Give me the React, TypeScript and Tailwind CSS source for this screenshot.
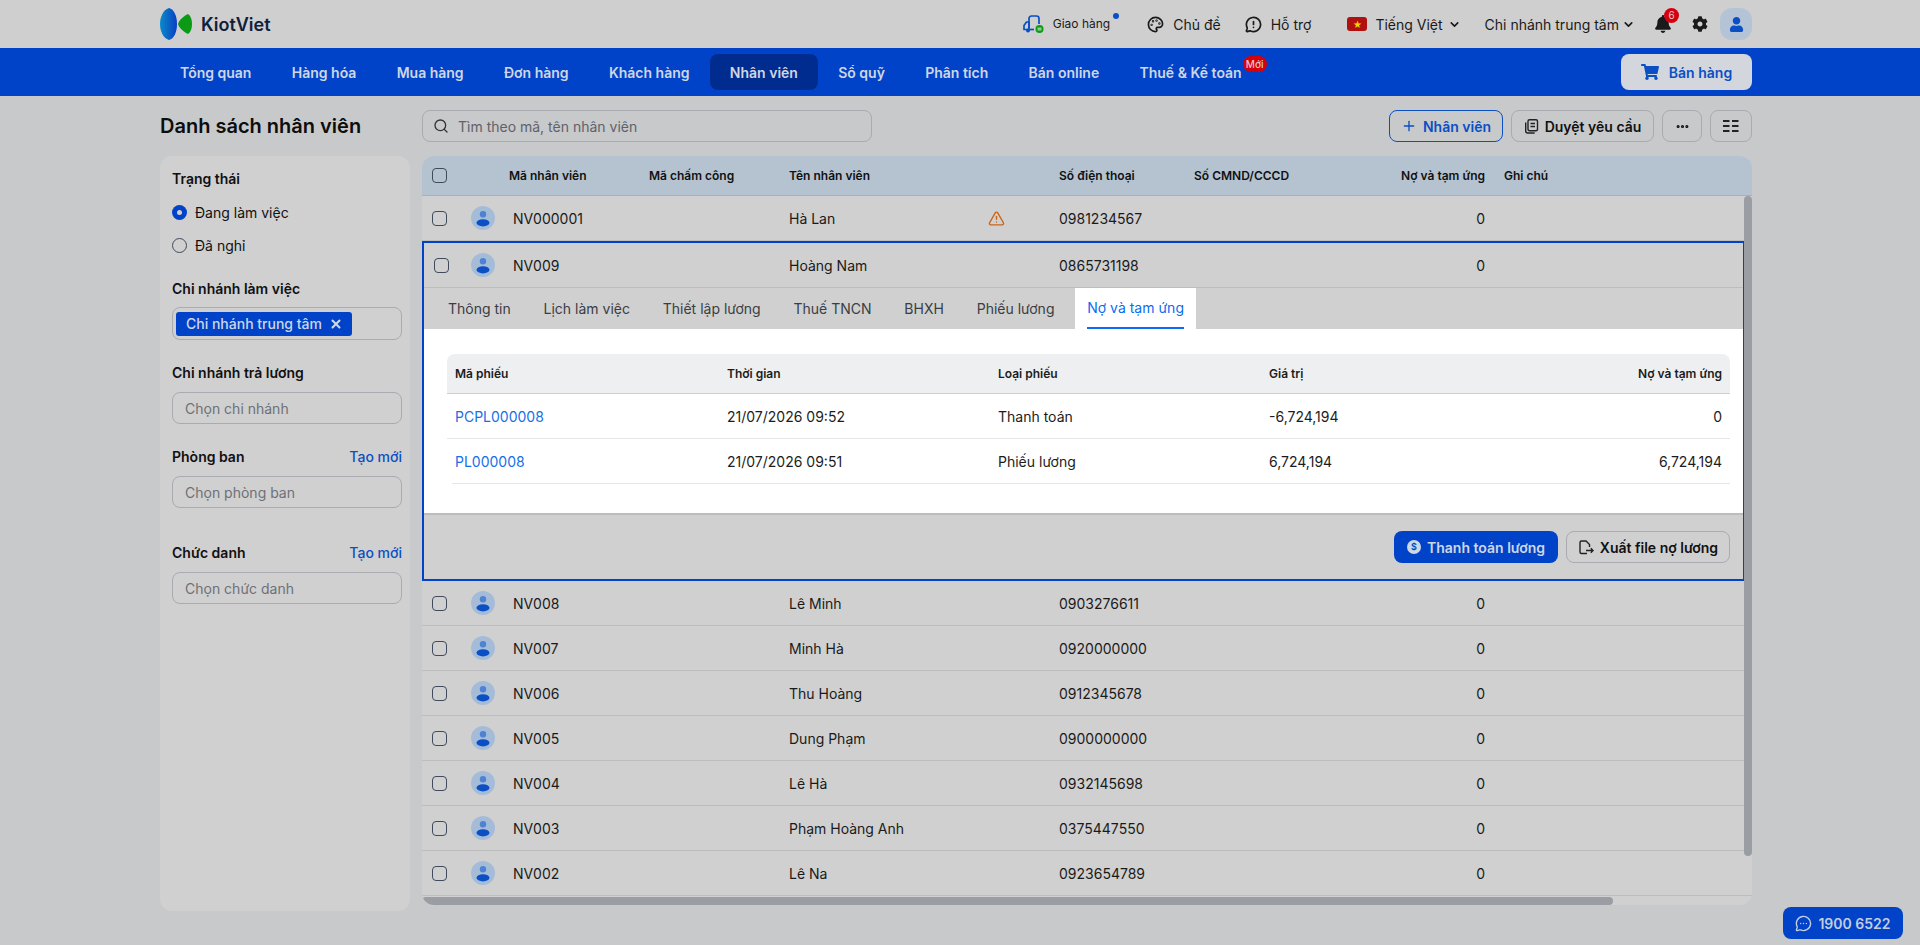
import React from "react";
import { Search, Plus, Palette, MessageCircleWarning, ChevronDown, X, TriangleAlert, Ellipsis, MessageCircleMore } from "lucide-react";
import { FaBell, FaCog, FaShoppingCart, FaUser } from "react-icons/fa";

const nav = ["Tổng quan", "Hàng hóa", "Mua hàng", "Đơn hàng", "Khách hàng", "Nhân viên", "Sổ quỹ", "Phân tích", "Bán online", "Thuế & Kế toán"];
const rowsBelow = [
  ["NV008", "Lê Minh", "0903276611"],
  ["NV007", "Minh Hà", "0920000000"],
  ["NV006", "Thu Hoàng", "0912345678"],
  ["NV005", "Dung Phạm", "0900000000"],
  ["NV004", "Lê Hà", "0932145698"],
  ["NV003", "Phạm Hoàng Anh", "0375447550"],
  ["NV002", "Lê Na", "0923654789"],
];
const tabs = ["Thông tin", "Lịch làm việc", "Thiết lập lương", "Thuế TNCN", "BHXH", "Phiếu lương"];

function Check() {
  return <span className="block w-[15px] h-[15px] rounded-[4px] border border-[#3f4a5a] shrink-0" />;
}
function Avatar() {
  return (
    <span className="w-6 h-6 rounded-full bg-[#a5bcd9] flex items-center justify-center shrink-0">
      <svg width="14" height="17" viewBox="0 0 14 17">
        <circle cx="7" cy="4.2" r="3.2" fill="#4f82d0" />
        <ellipse cx="7" cy="12.8" rx="6.5" ry="3.6" fill="#0a4fc4" />
      </svg>
    </span>
  );
}
function Row({ code, name, phone, warn, inPanel }: { code: string; name: string; phone: string; warn?: boolean; inPanel?: boolean }) {
  return (
    <div className="flex items-center h-[45px] border-b border-[#bdbdbd] text-[14px] text-[#1a1a1a]">
      <span className="w-[10px] shrink-0" />
      <Check />
      <span className={inPanel ? "w-[22px] shrink-0" : "w-6 shrink-0"} />
      <Avatar />
      <span className="w-[18px] shrink-0" />
      <span className="w-[276px] shrink-0">{code}</span>
      <span className="w-[199px] shrink-0">{name}</span>
      <span className="w-[71px] shrink-0 flex items-center">{warn && <TriangleAlert size={17} className="text-[#c9661a]" />}</span>
      <span className="w-[130px] shrink-0">{phone}</span>
      <span className="w-[296px] text-right shrink-0">0</span>
    </div>
  );
}

function Filter({ label, action, placeholder }: { label: string; action?: boolean; placeholder: string }) {
  return (
    <div>
      <div className="flex justify-between items-center h-5 text-[14px]">
        <span className="font-semibold text-[#111]">{label}</span>
        {action && <span className="font-medium text-[#0a4fc4] text-[14px]">Tạo mới</span>}
      </div>
      <div className="mt-[10px] h-8 rounded-lg border border-[#a9abb0] flex items-center px-3 text-[14px] text-[#6e7078]">{placeholder}</div>
    </div>
  );
}

export default function App() {
  return (
    <div className="w-[1920px] h-[945px] overflow-hidden relative bg-[#c8c9cb] text-[#111] font-['Inter',sans-serif]">
      <header className="h-12 bg-[#cfcfcf] pl-[160px] pr-[168px] flex items-center">
        <svg width="33" height="32" viewBox="0 0 33 32" className="shrink-0">
          <defs>
            <linearGradient id="kv" x1="0" x2="1" y1="0" y2="0">
              <stop offset="0" stopColor="#0a8bc9" />
              <stop offset="1" stopColor="#0a3fc4" />
            </linearGradient>
          </defs>
          <path d="M9 0C3 2 0 9 0 16s3 14 9 16c5-1 8-8 8-16S14 1 9 0z" fill="url(#kv)" />
          <path d="M28 6c-4 2-9 6-10 10 1 4 6 8 10 10 3-2 4-6 4-10s-1-8-4-10z" fill="#0a9a15" />
        </svg>
        <span className="ml-2 text-[18px] font-semibold text-[#10203a]">KiotViet</span>
        <div className="ml-auto flex items-center text-[14px] text-[#1a1a1a]">
          <svg width="22" height="20" viewBox="0 0 22 20" fill="none" className="shrink-0">
            <path d="M6 14V4.5A2.5 2.5 0 0 1 8.500 2h5A2.500 2.500 0 0 1 16 4.500V10" stroke="#0a4fc4" strokeWidth="1.7" />
            <path d="M6 8H3.500L1 11.500V15.500h5z" stroke="#0a4fc4" strokeWidth="1.700" strokeLinejoin="round" />
            <path d="M6 15.500h5" stroke="#0a4fc4" strokeWidth="1.700" />
            <circle cx="5" cy="16.500" r="2" fill="#0a4fc4" />
            <circle cx="16.500" cy="15" r="4" fill="#0a9a15" />
            <path d="M14.500 14.200h4M14.500 15.900h4" stroke="#cfe8cf" />
          </svg>
          <span className="relative ml-[8px] text-[12px] pr-3">Giao hàng<span className="absolute right-[3px] top-[-2px] w-[6px] h-[6px] rounded-full bg-[#0a4fc4]" /></span>
          <Palette size={17} strokeWidth={2.4} className="ml-[25px]" />
          <span className="ml-[9px]">Chủ đề</span>
          <MessageCircleWarning size={17} strokeWidth={2.4} className="ml-[24px]" />
          <span className="ml-[9px]">Hỗ trợ</span>
          <span className="ml-[36px] w-5 h-[14px] rounded-[3px] bg-[#b0100f] flex items-center justify-center text-[#f2d500] text-[9px] leading-none">★</span>
          <span className="ml-2">Tiếng Việt</span>
          <ChevronDown size={13} strokeWidth={3} className="ml-[5px]" />
          <span className="ml-[24px]">Chi nhánh trung tâm</span>
          <ChevronDown size={13} strokeWidth={3} className="ml-[3px]" />
          <span className="relative ml-[19px] block">
            <FaBell size={18} />
            <span className="absolute -top-[7px] -right-[7px] w-[15px] h-[15px] rounded-full bg-[#d5000f] text-[#e8c8c8] text-[10px] flex items-center justify-center">6</span>
          </span>
          <FaCog size={16} className="ml-[20px]" />
          <span className="ml-3 w-8 h-8 rounded-xl bg-[#b5c3d6] flex items-center justify-center">
            <FaUser size={15} className="text-[#0a4fc4]" />
          </span>
        </div>
      </header>

      <nav className="h-12 bg-[#0043c8] pl-[160px] pr-[168px] flex items-center gap-[0.3px]">
        {nav.map((n, i) => (
          <span key={n} className={`relative h-9 px-5 flex items-center rounded-lg text-[14px] font-semibold text-[#cfd6e4] whitespace-nowrap ${i === 5 ? "bg-[#002c8f]" : ""}`}>
            {n}
            {i === 9 && <span className="absolute right-[-5px] top-[2px] h-4 w-6 rounded-full bg-[#d5000f] text-[#e5c5c5] text-[10px] font-medium flex items-center justify-center">Mới</span>}
          </span>
        ))}
        <span className="ml-auto w-[131px] h-9 rounded-lg bg-[#d3d6dc] flex items-center justify-center gap-[10px] text-[14px] font-semibold text-[#0a4fc4]">
          <FaShoppingCart size={18} />Bán hàng
        </span>
      </nav>

      <main className="pl-[160px] pr-[168px] pt-[14px]">
        <div className="flex items-center h-8">
          <h1 className="w-[262px] text-[20px] font-semibold text-[#0d0d0d] whitespace-nowrap">Danh sách nhân viên</h1>
          <div className="w-[450px] h-8 rounded-lg border border-[#a9abb0] flex items-center pl-[10px] text-[14px] text-[#5f6269]">
            <Search size={16} className="text-[#333] mr-[9px]" />Tìm theo mã, tên nhân viên
          </div>
          <div className="ml-auto flex items-center gap-2 text-[14px] font-semibold">
            <span className="w-[114px] h-8 rounded-lg border border-[#0a4fc4] text-[#0a4fc4] flex items-center justify-center gap-[6px]"><Plus size={16} />Nhân viên</span>
            <span className="w-[143px] h-8 rounded-lg border border-[#a9abb0] flex items-center justify-center gap-[6px]">
              <svg width="15" height="16" viewBox="0 0 15 16" fill="none" stroke="#222" strokeWidth="1.4"><rect x="4" y="1.700" width="9.500" height="11" rx="1.500" /><path d="M1.700 4.500v8.500a2 2 0 0 0 2 2h7" /><path d="M6.500 5.500h4.500M6.500 8.500h4.500" /></svg>
              Duyệt yêu cầu
            </span>
            <span className="w-[40px] h-8 rounded-lg border border-[#a9abb0] flex items-center justify-center"><Ellipsis size={15} strokeWidth={3} /></span>
            <span className="w-[42px] h-8 rounded-lg border border-[#a9abb0] flex items-center justify-center">
              <svg width="16" height="12" viewBox="0 0 16 12" fill="#222"><rect width="6.500" height="2" /><rect x="9" width="6.500" height="2" /><rect y="5" width="6.500" height="2" /><rect x="9" y="5" width="6.500" height="2" /><rect y="10" width="6.500" height="2" /><rect x="9" y="10" width="6.500" height="2" /></svg>
            </span>
          </div>
        </div>

        <div className="flex items-start gap-[12px] mt-[14px]">
          <aside className="w-[250px] h-[755px] shrink-0 bg-[#d0d0d0] rounded-xl pl-3 pr-2 pt-[12px]">
            <div className="text-[14px] font-semibold h-5">Trạng thái</div>
            <div className="mt-[14px] flex items-center gap-[8px] h-5 text-[14px]">
              <span className="w-[15px] h-[15px] rounded-full bg-[#0043c8] flex items-center justify-center"><span className="w-[5px] h-[5px] rounded-full bg-[#d0d0d0]" /></span>Đang làm việc
            </div>
            <div className="mt-[13px] flex items-center gap-[8px] h-5 text-[14px]">
              <span className="w-[15px] h-[15px] rounded-full border border-[#3f4a5a]" />Đã nghỉ
            </div>
            <div className="mt-[23px] text-[14px] font-semibold h-5">Chi nhánh làm việc</div>
            <div className="mt-[9px] h-[33px] rounded-lg border border-[#a9abb0] flex items-center px-[3px]">
              <span className="w-[176px] h-6 rounded-[3px] bg-[#0043c8] flex items-center pl-[10px] text-[14px] font-medium text-[#cfd6e4] whitespace-nowrap">Chi nhánh trung tâm<X size={14} strokeWidth={3.5} className="ml-[7px]" /></span>
            </div>
            <div className="mt-[22px] flex flex-col gap-[22px]">
              <Filter label="Chi nhánh trả lương" placeholder="Chọn chi nhánh" />
              <Filter label="Phòng ban" action placeholder="Chọn phòng ban" />
              <div className="mt-[12px]"><Filter label="Chức danh" action placeholder="Chọn chức danh" /></div>
            </div>
          </aside>

          <section className="relative w-[1330px] h-[749px] bg-[#d0d0d0] rounded-xl overflow-hidden">
            <div className="h-10 bg-[#b5c3d1] border-b border-[#9db2cc] flex items-center text-[12px] font-semibold text-[#111]">
              <span className="w-[10px]" /><Check />
              <span className="w-[62px]" />
              <span className="w-[140px]">Mã nhân viên</span>
              <span className="w-[140px]">Mã chấm công</span>
              <span className="w-[270px]">Tên nhân viên</span>
              <span className="w-[135px]">Số điện thoại</span>
              <span className="w-[130px]">Số CMND/CCCD</span>
              <span className="w-[161px] text-right">Nợ và tạm ứng</span>
              <span className="ml-[19px]">Ghi chú</span>
            </div>
            <Row code="NV000001" name="Hà Lan" phone="0981234567" warn />
            <div className="mr-[7px] border-2 border-[#0043c8]">
              <Row code="NV009" name="Hoàng Nam" phone="0865731198" inPanel />
              <div className="h-[41px] flex items-end pl-[12px] gap-[8.8px] text-[14px] text-[#3a3d44]">
                {tabs.map((t) => <span key={t} className="h-[41px] px-3 flex items-center">{t}</span>)}
                <span className="h-[41px] px-3 bg-white text-[#0a6cf0]">
                  <span className="h-full flex items-center border-b-2 border-[#0a6cf0]">Nợ và tạm ứng</span>
                </span>
              </div>
              <div className="h-[186px] bg-white border-b-2 border-[#bdbdbd] pt-[25px] pl-[23px] pr-[13px] text-[14px] text-[#1c1c1c]">
                <div className="h-10 bg-[#eeeff1] rounded-t-lg border-b border-[#cfd0d4] flex items-center px-2 text-[12px] font-semibold">
                  <span className="w-[272px]">Mã phiếu</span><span className="w-[271px]">Thời gian</span><span className="w-[271px]">Loại phiếu</span><span className="w-[200px]">Giá trị</span><span className="ml-auto">Nợ và tạm ứng</span>
                </div>
                <div className="h-[45px] border-b border-[#e6e6e6] flex items-center px-2">
                  <span className="w-[272px] text-[#1670e6]">PCPL000008</span><span className="w-[271px]">21/07/2026 09:52</span><span className="w-[271px]">Thanh toán</span><span className="w-[200px]">-6,724,194</span><span className="ml-auto">0</span>
                </div>
                <div className="h-[45px] ml-[5px] border-b border-[#e6e6e6] flex items-center pl-[3px] pr-2">
                  <span className="w-[272px] text-[#1670e6]">PL000008</span><span className="w-[271px]">21/07/2026 09:51</span><span className="w-[271px]">Phiếu lương</span><span className="w-[200px]">6,724,194</span><span className="ml-auto">6,724,194</span>
                </div>
              </div>
              <div className="h-[64px] flex items-center justify-end gap-2 pr-[13px] text-[14px] font-semibold">
                <span className="w-[164px] h-8 rounded-lg bg-[#0043c8] text-[#cfd6e4] flex items-center justify-center gap-[6px]">
                  <span className="w-[14px] h-[14px] rounded-full bg-[#cfd6e4] text-[#0043c8] text-[9px] flex items-center justify-center">$</span>Thanh toán lương
                </span>
                <span className="w-[164px] h-8 rounded-lg border border-[#a9abb0] flex items-center justify-center gap-[6px]">
                  <svg width="16" height="15" viewBox="0 0 16 15" fill="none" stroke="#222" strokeWidth="1.400"><path d="M9 13.500H3.500a1.500 1.500 0 0 1-1.500-1.500V2.500A1.500 1.500 0 0 1 3.500 1H8l3.500 3.500V7" /><path d="M8 10.500h7M12.800 8.300l2.200 2.200-2.200 2.200" /></svg>
                  Xuất file nợ lương
                </span>
              </div>
            </div>
            {rowsBelow.map((r) => <Row key={r[0]} code={r[0]} name={r[1]} phone={r[2]} />)}
            <div className="absolute right-0 top-[40px] w-2 h-[660px] rounded-full bg-[#9a9da3]" />
            <div className="absolute left-0 bottom-0 w-[1191px] h-2 rounded-full bg-[#9a9da3]" />
          </section>
        </div>
      </main>

      <div className="absolute left-[1783px] top-[907px] w-[120px] h-8 rounded-lg bg-[#0043c8] text-[#c3cddf] flex items-center justify-center gap-[6px] text-[14px] font-semibold">
        <MessageCircleMore size={17} />1900 6522
      </div>
    </div>
  );
}
